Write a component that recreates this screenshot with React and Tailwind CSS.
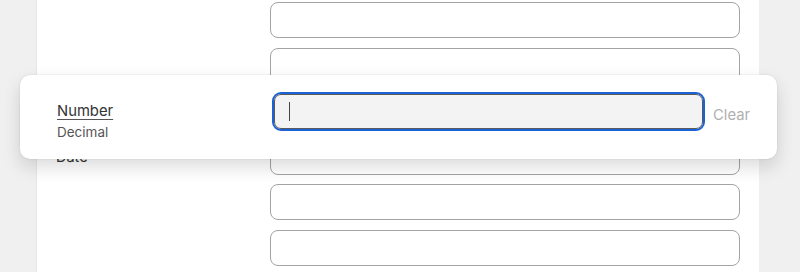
import React from "react";

const rows = [
  { label: "" },
  { label: "" },
  { label: "" },
  { label: "Date" },
  { label: "" },
  { label: "" },
];

export default function App() {
  return (
    <div
      className="relative w-[800px] h-[272px] overflow-hidden bg-[#f0f0f0] flex"
      style={{ fontFamily: "Inter, 'Noto Sans', sans-serif" }}
    >
      <div className="w-[37px] shrink-0 border-r border-[#e6e6e6]" />
      <div className="w-[722px] shrink-0 bg-white flex flex-col gap-[9.5px] pt-[2px]">
        {rows.map((r, i) => (
          <div key={i} className="flex items-center h-[36px] shrink-0">
            <div className="w-[233px] pl-[19px] text-[14.5px] text-[#333]">{r.label}</div>
            <div className="w-[470px] h-[36px] rounded-[8px] border border-[#a3a3a3] bg-white" />
          </div>
        ))}
      </div>
      <div className="flex-1" />

      <div className="absolute left-[20px] top-[75px] w-[757px] h-[84px] bg-white rounded-[10px] shadow-[0_8px_18px_rgba(0,0,0,0.14),0_0_2px_rgba(0,0,0,0.12)] flex items-start pt-[17px]">
        <div className="w-[252px] pl-[37px] pt-[12px] leading-none">
          <div className="text-[14.8px] text-[#333] underline underline-offset-[3px] decoration-[#555]">Number</div>
          <div className="text-[13.5px] text-[#555] mt-[7px]">Decimal</div>
        </div>
        <div className="w-[433px] h-[39px] rounded-[9px] border-2 border-[#1a62d6]">
          <div className="w-full h-full rounded-[7px] border border-[#5a5a5a] bg-[#f3f3f3] flex items-center pl-[14px]">
            <div className="w-[1px] h-[19px] bg-[#444]" />
          </div>
        </div>
        <div className="ml-[8px] mt-[16px] text-[14.8px] text-[#b0b0b0] leading-none">Clear</div>
      </div>
    </div>
  );
}
